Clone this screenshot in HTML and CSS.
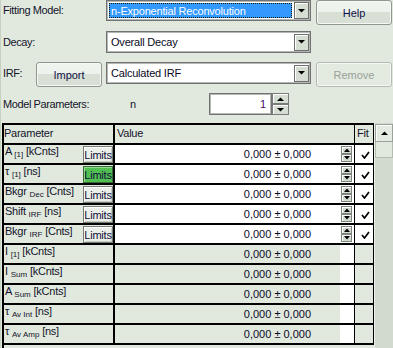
FILE: index.html
```html
<!DOCTYPE html>
<html>
<head lang="en">
    <meta charset="UTF-8">
    <title>Fitting</title>
    <link rel="stylesheet" href="styles.css">
</head>
<body>

<div class="form">
    <div class="form-row row-model">
        <label class="form-label label-wide">Fitting Model:</label>
        <div class="combo">
            <span class="combo-value"><span class="combo-sel">n-Exponential Reconvolution</span></span>
            <span class="combo-btn"><svg width="7" height="4" viewBox="0 0 7 4"><polygon points="0,0 7,0 3.5,3.5"/></svg></span>
        </div>
        <button class="btn">Help</button>
    </div>

    <div class="form-row row-decay">
        <label class="form-label label-wide">Decay:</label>
        <div class="combo">
            <span class="combo-value">Overall Decay</span>
            <span class="combo-btn"><svg width="7" height="4" viewBox="0 0 7 4"><polygon points="0,0 7,0 3.5,3.5"/></svg></span>
        </div>
    </div>

    <div class="form-row row-irf">
        <label class="form-label label-short">IRF:</label>
        <button class="btn btn-import">Import</button>
        <div class="combo">
            <span class="combo-value">Calculated IRF</span>
            <span class="combo-btn"><svg width="7" height="4" viewBox="0 0 7 4"><polygon points="0,0 7,0 3.5,3.5"/></svg></span>
        </div>
        <button class="btn btn-disabled">Remove</button>
    </div>

    <div class="form-row row-params">
        <label class="form-label label-params">Model Parameters:</label>
        <span class="form-label label-n">n</span>
        <div class="num-input">1</div>
        <div class="spin">
            <span class="spin-btn"><svg width="7" height="4" viewBox="0 0 7 4"><polygon points="0,4 7,4 3.5,0.5"/></svg></span>
            <span class="spin-btn"><svg width="7" height="4" viewBox="0 0 7 4"><polygon points="0,0 7,0 3.5,3.5"/></svg></span>
        </div>
    </div>
</div>

<div class="grid-wrap">
    <div class="grid">
        <div class="grid-row grid-head">
            <div class="cell cell-param">Parameter</div>
            <div class="cell cell-value cell-title">Value</div>
            <div class="cell cell-fit cell-title">Fit</div>
        </div>

        <div class="grid-row">
            <div class="cell cell-param"><span class="pname">A <sub>[1]</sub> [kCnts]</span><button class="limits">Limits</button></div>
            <div class="cell cell-value"><span class="num">0,000 ± 0,000</span><span class="vspin"><span><svg width="6" height="4" viewBox="0 0 6 4"><polygon points="0,4 6,4 3,0.5"/></svg></span><span><svg width="6" height="4" viewBox="0 0 6 4"><polygon points="0,0 6,0 3,3.5"/></svg></span></span></div>
            <div class="cell cell-fit"><svg class="check" width="9" height="8" viewBox="0 0 9 8"><polyline points="1,4 3.5,7 8,1"/></svg></div>
        </div>

        <div class="grid-row">
            <div class="cell cell-param"><span class="pname">τ <sub>[1]</sub> [ns]</span><button class="limits limits-on">Limits</button></div>
            <div class="cell cell-value"><span class="num">0,000 ± 0,000</span><span class="vspin"><span><svg width="6" height="4" viewBox="0 0 6 4"><polygon points="0,4 6,4 3,0.5"/></svg></span><span><svg width="6" height="4" viewBox="0 0 6 4"><polygon points="0,0 6,0 3,3.5"/></svg></span></span></div>
            <div class="cell cell-fit"><svg class="check" width="9" height="8" viewBox="0 0 9 8"><polyline points="1,4 3.5,7 8,1"/></svg></div>
        </div>

        <div class="grid-row">
            <div class="cell cell-param"><span class="pname">Bkgr <sub>Dec</sub> [Cnts]</span><button class="limits">Limits</button></div>
            <div class="cell cell-value"><span class="num">0,000 ± 0,000</span><span class="vspin"><span><svg width="6" height="4" viewBox="0 0 6 4"><polygon points="0,4 6,4 3,0.5"/></svg></span><span><svg width="6" height="4" viewBox="0 0 6 4"><polygon points="0,0 6,0 3,3.5"/></svg></span></span></div>
            <div class="cell cell-fit"><svg class="check" width="9" height="8" viewBox="0 0 9 8"><polyline points="1,4 3.5,7 8,1"/></svg></div>
        </div>

        <div class="grid-row">
            <div class="cell cell-param"><span class="pname">Shift <sub>IRF</sub> [ns]</span><button class="limits">Limits</button></div>
            <div class="cell cell-value"><span class="num">0,000 ± 0,000</span><span class="vspin"><span><svg width="6" height="4" viewBox="0 0 6 4"><polygon points="0,4 6,4 3,0.5"/></svg></span><span><svg width="6" height="4" viewBox="0 0 6 4"><polygon points="0,0 6,0 3,3.5"/></svg></span></span></div>
            <div class="cell cell-fit"><svg class="check" width="9" height="8" viewBox="0 0 9 8"><polyline points="1,4 3.5,7 8,1"/></svg></div>
        </div>

        <div class="grid-row">
            <div class="cell cell-param"><span class="pname">Bkgr <sub>IRF</sub> [Cnts]</span><button class="limits">Limits</button></div>
            <div class="cell cell-value"><span class="num">0,000 ± 0,000</span><span class="vspin"><span><svg width="6" height="4" viewBox="0 0 6 4"><polygon points="0,4 6,4 3,0.5"/></svg></span><span><svg width="6" height="4" viewBox="0 0 6 4"><polygon points="0,0 6,0 3,3.5"/></svg></span></span></div>
            <div class="cell cell-fit"><svg class="check" width="9" height="8" viewBox="0 0 9 8"><polyline points="1,4 3.5,7 8,1"/></svg></div>
        </div>

        <!-- computed values, read only -->
        <div class="grid-row row-calc">
            <div class="cell cell-param"><span class="pname">I <sub>[1]</sub> [kCnts]</span></div>
            <div class="cell cell-value"><span class="num">0,000 ± 0,000</span></div>
            <div class="cell cell-fit"></div>
        </div>
        <div class="grid-row row-calc">
            <div class="cell cell-param"><span class="pname">I <sub>Sum</sub> [kCnts]</span></div>
            <div class="cell cell-value"><span class="num">0,000 ± 0,000</span></div>
            <div class="cell cell-fit"></div>
        </div>
        <div class="grid-row row-calc">
            <div class="cell cell-param"><span class="pname">A <sub>Sum</sub> [kCnts]</span></div>
            <div class="cell cell-value"><span class="num">0,000 ± 0,000</span></div>
            <div class="cell cell-fit"></div>
        </div>
        <div class="grid-row row-calc">
            <div class="cell cell-param"><span class="pname">τ <sub>Av Int</sub> [ns]</span></div>
            <div class="cell cell-value"><span class="num">0,000 ± 0,000</span></div>
            <div class="cell cell-fit"></div>
        </div>
        <div class="grid-row row-calc">
            <div class="cell cell-param"><span class="pname">τ <sub>Av Amp</sub> [ns]</span></div>
            <div class="cell cell-value"><span class="num">0,000 ± 0,000</span></div>
            <div class="cell cell-fit"></div>
        </div>
    </div>

    <div class="vscroll">
        <span class="sb-up"><svg width="7" height="4" viewBox="0 0 7 4"><polygon points="0,4 7,4 3.5,0.5"/></svg></span>
        <span class="sb-thumb"></span>
    </div>
</div>

</body>
</html>
```

FILE: styles.css
```css
html, body {
    margin: 0px;
    padding: 0px;
}

body {
    width: 393px;
    height: 348px;
    overflow: hidden;
    background: #e1e9de;
    font-family: "Liberation Sans", Arial, sans-serif;
    font-size: 11px;
    color: #14142c;
    box-shadow: inset 1px 0px #c3d3bf;
}

/* top form */
.form {
    padding-left: 3px;
}

.form-row {
    display: flex;
    align-items: flex-start;
}

.row-model {
    height: 25px;
}

.row-decay {
    margin-top: 6px;
    height: 22px;
}

.row-irf {
    margin-top: 9px;
    height: 25px;
}

.row-params {
    margin-top: 6px;
    height: 22px;
}

.form-label {
    line-height: 22px;
    letter-spacing: -0.4px;
    white-space: nowrap;
}

.row-model .form-label {
    line-height: 21px;
}

.label-wide {
    width: 103px;
}

.label-short {
    width: 33px;
}

.label-params {
    width: 127px;
}

.label-n {
    width: 79px;
}

.combo {
    width: 205px;
    height: 22px;
    box-sizing: border-box;
    background: #ffffff;
    border: 1px solid #727272;
    box-shadow: inset 0px 0px 0px 1px #b4b8b4;
    display: flex;
    align-items: center;
    padding: 2px 1px 2px 2px;
}

.row-model .combo {
    height: 21px;
}

.row-irf .combo {
    margin-left: 4px;
}

.combo-value {
    flex: 1;
    height: 100%;
    display: flex;
    align-items: center;
    padding-left: 2px;
    letter-spacing: -0.2px;
    color: #0a0a24;
    white-space: nowrap;
    overflow: hidden;
}

.combo-sel {
    display: flex;
    align-items: center;
    height: 100%;
    width: 100%;
    margin-left: -2px;
    padding-left: 2px;
    box-sizing: border-box;
    background: #3399ff;
    color: #ffffff;
    outline: 1px dotted #1a1a00;
    outline-offset: -1px;
}

.combo-btn {
    width: 15px;
    height: 17px;
    box-sizing: border-box;
    border: 1px solid #6e6e6e;
    box-shadow: inset 1px 1px #ffffff;
    background: #d6ddd3;
    display: flex;
    align-items: center;
    justify-content: center;
}

svg polygon {
    fill: #000000;
}

.btn {
    width: 76px;
    height: 25px;
    margin-left: 5px;
    padding: 0px;
    border: 1px solid #8f978f;
    border-radius: 3px;
    background: linear-gradient(#f0f4ee 0px, #eef2ec 11px, #d8e0d5 11px, #d8e0d5 100%);
    box-shadow: inset 0px 0px 0px 1px #f6f8f5;
    font-family: "Liberation Sans", Arial, sans-serif;
    font-size: 11px;
    color: #10104a;
}

.btn-import {
    width: 66px;
    margin-left: 0px;
}

.btn-disabled {
    color: #98a098;
    border-color: #b3bbb3;
    background: #e3eae0;
}

.num-input {
    width: 63px;
    height: 22px;
    box-sizing: border-box;
    border: 1px solid #727272;
    box-shadow: inset 0px 0px 0px 1px #b4b8b4;
    background: #ffffff;
    text-align: right;
    line-height: 20px;
    padding-right: 5px;
    color: #4a0a6a;
}

.spin {
    display: flex;
    flex-direction: column;
    width: 17px;
}

.spin-btn {
    height: 11px;
    box-sizing: border-box;
    border: 1px solid #7a7a7a;
    box-shadow: inset 1px 1px #ffffff;
    background: #d6ddd3;
    display: flex;
    align-items: center;
    justify-content: center;
}

/* parameter grid */
.grid-wrap {
    display: flex;
    margin-top: 8px;
    margin-left: 2px;
}

.grid {
    width: 372px;
    box-sizing: border-box;
    border-top: 2px solid #000000;
    border-left: 2px solid #000000;
}

.grid-row {
    display: grid;
    grid-template-columns: 111px 240px 19px;
    height: 20px;
    box-sizing: border-box;
    border-bottom: 2px solid #000000;
}

.cell {
    box-sizing: border-box;
    overflow: hidden;
    white-space: nowrap;
}

.cell-param {
    border-right: 2px solid #000000;
    display: flex;
    justify-content: space-between;
    align-items: flex-start;
    letter-spacing: -0.25px;
}

.grid-head .cell-param {
    line-height: 17px;
}

.cell-value {
    border-right: 1px solid #000000;
    background: #ffffff;
    display: flex;
    justify-content: flex-end;
    align-items: center;
}

.cell-fit {
    border-right: 1px solid #000000;
    background: #ffffff;
    display: flex;
    align-items: center;
}

.grid-head .cell-value,
.grid-head .cell-fit {
    background: #e1e9de;
    justify-content: flex-start;
    line-height: 17px;
    align-items: flex-start;
}

.cell-title {
    padding-left: 2px;
    letter-spacing: -0.25px;
}

.pname {
    padding-left: 1px;
    line-height: 13px;
}

.pname sub {
    font-size: 8px;
    line-height: 0px;
    vertical-align: -2px;
    letter-spacing: 0px;
}

.limits {
    width: 30px;
    height: 17px;
    margin-top: 1px;
    padding: 0px;
    border: 1px solid #767e76;
    box-shadow: inset 1px 1px #ffffff, inset -1px -1px #c4ccc2;
    background: #eceeea;
    font-family: "Liberation Sans", Arial, sans-serif;
    font-size: 11px;
    letter-spacing: -0.2px;
    color: #10103a;
    line-height: 14px;
}

.limits-on {
    background: #52bf52;
    box-shadow: inset 1px 1px #8fdc8f;
    border-color: #3a6a3a;
}

.num {
    margin-right: 30px;
    color: #0a0a28;
}

.vspin {
    display: flex;
    flex-direction: column;
    width: 11px;
    margin-right: 2px;
}

.vspin span {
    height: 8px;
    box-sizing: border-box;
    border: 1px solid #7d857d;
    box-shadow: inset 1px 1px #ffffff;
    background: #d3dad0;
    display: flex;
    align-items: center;
    justify-content: center;
}

.check {
    margin-left: 6px;
    margin-top: 2px;
}

.check polyline {
    fill: none;
    stroke: #000000;
    stroke-width: 1.7;
}

.row-calc .cell-value {
    background: linear-gradient(to right, #e1e9de 225px, #ffffff 225px);
}

.row-calc .num {
    margin-right: 43px;
}

.row-calc .cell-fit {
    background: #e1e9de;
}

/* scrollbar */
.vscroll {
    width: 19px;
    height: 226px;
    box-sizing: border-box;
    background: #d2dace;
    border-left: 1px solid #eef2ec;
    display: flex;
    flex-direction: column;
    padding-top: 1px;
}

.sb-up {
    height: 18px;
    box-sizing: border-box;
    border: 1px solid #9aa29a;
    box-shadow: inset 1px 1px #ffffff;
    background: #e4ebe1;
    display: flex;
    align-items: center;
    justify-content: center;
}

.sb-thumb {
    height: 16px;
    box-sizing: border-box;
    border: 1px solid #b4bcb1;
    border-top: none;
    background: #e1e9de;
}
```
